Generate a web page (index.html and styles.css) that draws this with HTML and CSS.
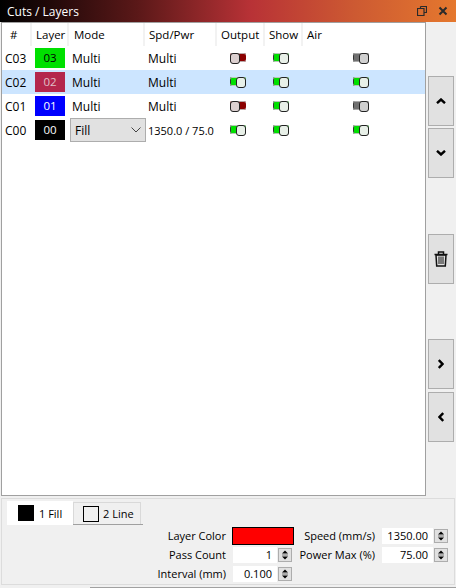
FILE: index.html
```html
<!DOCTYPE html>
<html lang="en">
<head>
<meta charset="utf-8">
<title>Cuts / Layers</title>
<link rel="stylesheet" href="styles.css">
</head>
<body>
<div class="window">
  <header class="titlebar">
    <span class="title">Cuts / Layers</span>
    <span class="win-icons">
      <svg class="win-icon" width="10" height="10" viewBox="0 0 10 10"><path d="M3.500.5h6v6h-2M3.500.5v2M.5 2.500h6.500v7h-6.500z" fill="none" stroke="#2a2a2a" stroke-width="1.200"/></svg>
      <svg class="win-icon" width="10" height="10" viewBox="0 0 10 10"><path d="M1.500 1.500l7 7M8.500 1.500l-7 7" fill="none" stroke="#2a2a2a" stroke-width="2"/></svg>
    </span>
  </header>
  <div class="main">
    <section class="table">
      <div class="row head">
        <div class="cell num">#</div><div class="cell">Layer</div><div class="cell mode">Mode</div><div class="cell">Spd/Pwr</div><div class="cell">Output</div><div class="cell">Show</div><div class="cell last">Air</div>
      </div>
      <div class="row">
        <div class="cell">C03</div><div class="cell"><span class="swatch green">03</span></div><div class="cell">Multi</div><div class="cell">Multi</div>
        <div class="cell tg"><span class="toggle off"></span></div><div class="cell tg"><span class="toggle on"></span></div><div class="cell tg"><span class="toggle grey"></span></div>
      </div>
      <div class="row selected">
        <div class="cell">C02</div><div class="cell"><span class="swatch crimson">02</span></div><div class="cell">Multi</div><div class="cell">Multi</div>
        <div class="cell tg"><span class="toggle on"></span></div><div class="cell tg"><span class="toggle on"></span></div><div class="cell tg"><span class="toggle on"></span></div>
      </div>
      <div class="row">
        <div class="cell">C01</div><div class="cell"><span class="swatch blue">01</span></div><div class="cell">Multi</div><div class="cell">Multi</div>
        <div class="cell tg"><span class="toggle off"></span></div><div class="cell tg"><span class="toggle on"></span></div><div class="cell tg"><span class="toggle grey"></span></div>
      </div>
      <div class="row">
        <div class="cell">C00</div><div class="cell"><span class="swatch black">00</span></div>
        <div class="cell"><span class="select">Fill<svg width="10" height="6" viewBox="0 0 10 6"><path d="M.5.5L5 5l4.500-4.500" fill="none" stroke="#444" stroke-width="1"/></svg></span></div>
        <div class="cell small">1350.0 / 75.0</div>
        <div class="cell tg"><span class="toggle on"></span></div><div class="cell tg"><span class="toggle on"></span></div><div class="cell tg"><span class="toggle on"></span></div>
      </div>
    </section>
    <aside class="side">
      <div class="group first">
        <button class="side-btn"><svg width="10" height="6" viewBox="0 0 10 6"><path d="M1 5.200l4-3.700 4 3.700" fill="none" stroke="#000" stroke-width="2.400"/></svg></button>
        <button class="side-btn"><svg width="10" height="6" viewBox="0 0 10 6"><path d="M1 .8l4 3.700 4-3.700" fill="none" stroke="#000" stroke-width="2.400"/></svg></button>
      </div>
      <div class="group trash">
        <button class="side-btn"><svg width="14" height="16" viewBox="0 0 14 16"><path d="M.5 3.500h13M4.500 3V1h5v2" fill="none" stroke="#111" stroke-width="1.500"/><path d="M2 4l.7 11h8.600l.7-11z" fill="none" stroke="#111" stroke-width="1.500"/><path d="M5 5.500v7.500M7 5.500v7.500M9 5.500v7.500" stroke="#111" stroke-width="1"/></svg></button>
      </div>
      <div class="group last">
        <button class="side-btn"><svg width="6" height="10" viewBox="0 0 6 10"><path d="M.8 1l3.700 4L.8 9" fill="none" stroke="#000" stroke-width="2.400"/></svg></button>
        <button class="side-btn"><svg width="6" height="10" viewBox="0 0 6 10"><path d="M5.200 1L1.500 5l3.700 4" fill="none" stroke="#000" stroke-width="2.400"/></svg></button>
      </div>
    </aside>
  </div>
  <section class="panel">
    <div class="tabs">
      <div class="tab active"><span class="tab-sw black"></span>1 Fill</div>
      <div class="tab"><span class="tab-sw"></span>2 Line</div>
    </div>
    <div class="fields">
      <div class="col col-left">
        <div class="field"><label>Layer Color</label><span class="color"></span></div>
        <div class="field inset"><label>Pass Count</label><span class="spin w-a">1</span><svg class="spinner" width="14" height="14" viewBox="0 0 14 14"><use href="#spin-arrows"/></svg></div>
        <div class="field inset"><label>Interval (mm)</label><span class="spin w-a">0.100</span><svg class="spinner" width="14" height="14" viewBox="0 0 14 14"><use href="#spin-arrows"/></svg></div>
      </div>
      <div class="col col-right">
        <div class="field"><label>Speed (mm/s)</label><span class="spin w-b">1350.00</span><svg class="spinner" width="14" height="14" viewBox="0 0 14 14"><use href="#spin-arrows"/></svg></div>
        <div class="field"><label>Power Max (%)</label><span class="spin w-b">75.00</span><svg class="spinner" width="14" height="14" viewBox="0 0 14 14"><use href="#spin-arrows"/></svg></div>
      </div>
    </div>
  </section>
  <div class="scrollline"></div>
</div>
<svg class="defs" width="0" height="0">
  <symbol id="spin-arrows" viewBox="0 0 14 14">
    <rect x=".5" y=".5" width="13" height="13" fill="#e1e1e1" stroke="#adadad"/>
    <path d="M7 2.500L4 5.500h6z" fill="#000"/>
    <path d="M4 7h6" stroke="#777" stroke-width="1"/>
    <path d="M7 11.500L4 8.500h6z" fill="#000"/>
  </symbol>
</svg>
</body>
</html>
```
FILE: styles.css
```css
* { box-sizing: border-box; }
html, body { margin: 0; padding: 0; }
body { width: 456px; height: 588px; overflow: hidden; background: #f0f0f0; font-family: "Open Sans", Roboto, sans-serif; font-size: 11px; color: #000; }
.window { display: flex; flex-direction: column; height: 588px; position: relative; }
.defs { position: absolute; }
.titlebar { height: 22px; flex: none; display: flex; align-items: center; justify-content: space-between; padding: 0 8px 0 7px; background: linear-gradient(90deg, #000 0%, #5a1818 30%, #b83236 55%, #cd5a32 78%, #e5782e 100%); color: #fff; }
.title { font-size: 12px; }
.win-icons { display: flex; gap: 11px; align-items: center; }
.win-icon { display: block; }
.main { flex: none; height: 474px; display: flex; padding-left: 1px; }
.table { width: 425px; height: 474px; background: #fff; border: 1px solid #a0a0a0; }
.row { display: grid; grid-template-columns: 30px 37px 76px 72px 48px 38px 1fr; height: 24px; align-items: center; font-size: 12px; }
.row.head { height: 23px; font-size: 11.5px; }
.row.selected { background: #cce5ff; }
.cell { padding-left: 3px; white-space: nowrap; }
.cell.small { font-size: 11px; }
.head .cell { height: 23px; line-height: 24px; border-right: 2px solid #f2f2f2; padding-left: 4px; }
.head .cell.num { padding-left: 8px; }
.head .cell.mode { padding-left: 5px; }
.head .cell.last { border-right: 0; }
.swatch { display: block; width: 30px; height: 20px; line-height: 19px; text-align: center; font-size: 11.5px; }
.green { background: #00e000; color: #000; }
.crimson { background: #b4264c; color: #e0c0c8; }
.blue { background: #0000ff; color: #fff; }
.swatch.black { background: #000; color: #fff; }
.select { display: flex; align-items: center; justify-content: space-between; width: 76px; height: 24px; padding: 0 4px; background: #e1e1e1; border: 1px solid #adadad; margin-left: -2px; }
.tg { padding: 0 6px 0 0; display: flex; justify-content: center; }
.toggle { display: block; position: relative; width: 16px; height: 9px; border-radius: 2px; margin-bottom: 1px; }
.toggle::after { content: ""; position: absolute; top: 0; width: 8px; height: 9px; border: 1px solid #222; border-radius: 3px; }
.toggle.on { background: #00e000; box-shadow: inset 0 1px #b8c8b8, inset 0 -1px #b8c8b8, inset 1px 0 #333; }
.toggle.on::after { right: 0; background: #e8f0e8; }
.toggle.off { background: #8b0000; box-shadow: inset 0 1px #b8a8a8, inset 0 -1px #b8a8a8; }
.toggle.off::after { left: 0; background: #dcd0d0; }
.toggle.grey { background: #707070; box-shadow: inset 0 1px #aaa, inset 0 -1px #aaa, inset 1px 0 #333; }
.toggle.grey::after { right: 0; background: #d0d0d0; }
.side { flex: none; width: 30px; padding-left: 2px; }
.group { display: flex; flex-direction: column; gap: 2px; }
.group.first { margin-top: 54px; }
.group.trash { margin-top: 56px; }
.group.last { margin-top: 55px; gap: 3px; }
.side-btn { display: flex; align-items: center; justify-content: center; width: 26px; height: 50px; padding: 0; background: #e1e1e1; border: 1px solid #adadad; }
.panel { flex: none; margin: 2px 1px 0; height: 87px; border: 1px solid #dcdcdc; background: #f0f0f0; padding: 2px 0 0 5px; }
.tabs { display: flex; height: 24px; align-items: flex-end; border-bottom: 1px solid #a0a0a0; width: 136px; }
.tab { display: flex; align-items: center; gap: 4px; height: 22px; width: 68px; padding-left: 9px; background: #f0f0f0; border: 1px solid #d9d9d9; border-bottom: 0; }
.tab.active { height: 24px; width: 66px; padding-left: 11px; background: #fff; border: 0; margin-bottom: -1px; z-index: 1; gap: 5px; }
.tab-sw { width: 16px; height: 16px; border: 1px solid #000; flex: none; }
.tab-sw.black { background: #000; }
.fields { display: flex; justify-content: flex-end; padding: 1px 6px 0 0; }
.col { display: flex; flex-direction: column; align-items: flex-end; }
.col-right { width: 154px; }
.field { display: flex; align-items: center; justify-content: flex-end; height: 19px; }
.field.inset { margin-right: 2px; }
.field label { margin-right: 7px; white-space: nowrap; }
.color { width: 62px; height: 18px; background: #f00; border: 1px solid #000; margin-left: -1px; }
.spin { height: 16px; line-height: 16px; background: #fff; text-align: right; padding-right: 5px; }
.w-a { width: 44px; }
.w-b { width: 51px; }
.spinner { display: block; margin-left: 1px; }
.scrollline { position: absolute; left: 90px; right: 0; top: 587px; height: 1px; background: #a0a0a0; }
```
